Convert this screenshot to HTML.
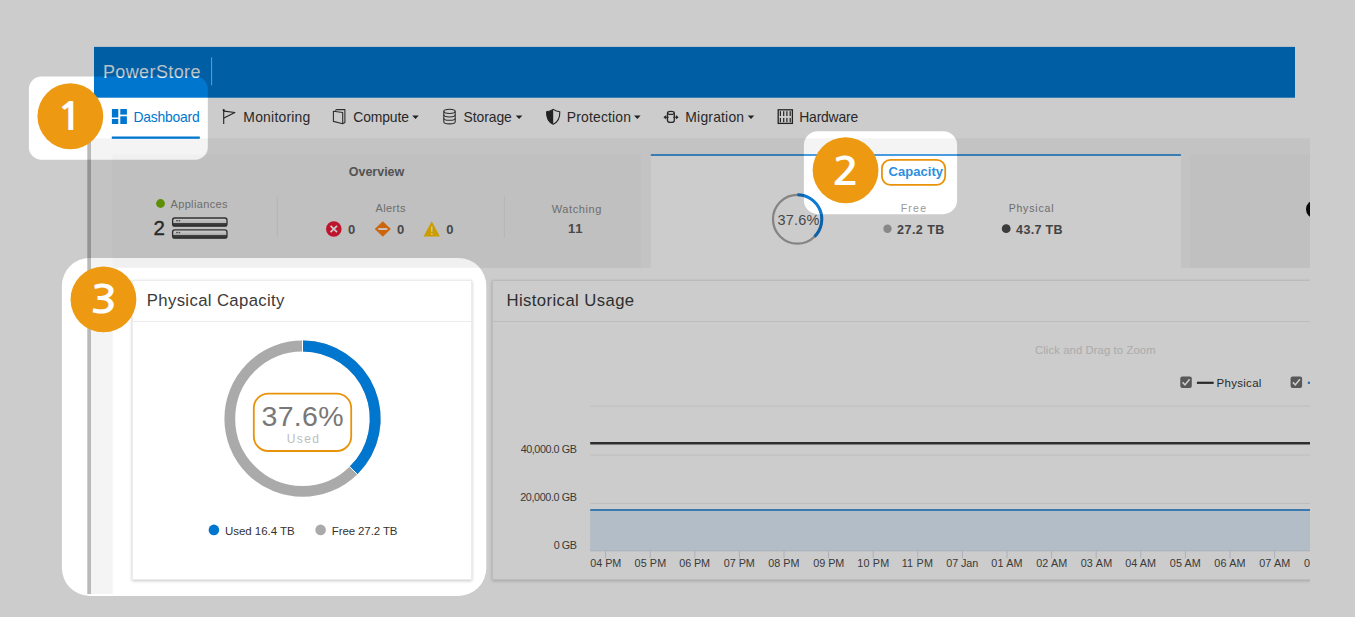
<!DOCTYPE html>
<html lang="en"><head><meta charset="utf-8"><title>PowerStore Dashboard</title>
<style>
html,body{margin:0;padding:0}
body{width:1355px;height:617px;overflow:hidden;background:#fff;position:relative;font-family:"Liberation Sans",Arial,sans-serif}
.t{position:absolute;line-height:1;white-space:nowrap;display:block}
.a{position:absolute;display:block}
#ui{position:absolute;left:0;top:0;width:1309.9px;height:593.8px;overflow:hidden}
.badge{position:absolute;width:66px;height:66px;color:#fff;font-family:"NanumGothic","Liberation Sans",sans-serif;font-weight:700;font-size:38.6px;line-height:66px;text-align:center}
.badge b{display:inline-block;font-weight:700;transform:scaleX(1.16);position:relative;top:0.8px;left:0.6px}
.ol{position:absolute;border:1.6px solid #e8930c;box-sizing:border-box}
</style></head><body>
<div id="ui">
<!-- header, page area, cards -->
<svg class="a" style="left:0;top:0" width="1310" height="594" viewBox="0 0 1310 594">
<rect x="94" y="46.9" width="1201" height="50.8" fill="#0076ce"/>
<rect x="211.1" y="57.3" width="1" height="28" fill="#fff" fill-opacity=".55"/>
<rect x="87.3" y="138.3" width="3.7" height="456" fill="#b9b9b9"/>
<rect x="91" y="138.3" width="1219" height="129.5" fill="#f4f4f4"/>
<rect x="91" y="267.8" width="21.7" height="327" fill="#f4f4f4"/>
<rect x="112.5" y="154.6" width="528.4" height="113.2" fill="#f0f0f0"/>
<rect x="650.8" y="154" width="530.1" height="113.8" fill="#fff"/>
<rect x="650.8" y="154" width="530.1" height="2" fill="#489cdf"/>
<rect x="1190.2" y="154.6" width="120" height="113.2" fill="#f0f0f0"/>
<circle cx="1315.1" cy="209.3" r="9.1" fill="#0d0d0d"/>
<rect x="111.8" y="136.5" width="88" height="2.3" fill="#0076ce"/>
<rect x="276.8" y="196.4" width="1" height="41" fill="#e3e3e3"/>
<rect x="503.9" y="196.4" width="1" height="41" fill="#e3e3e3"/>
</svg>
<div class="a" style="left:132.4px;top:279.5px;width:339.4px;height:300px;background:#fff;box-sizing:border-box;border:1px solid #ececec;box-shadow:0 1px 3px rgba(0,0,0,.22)"></div>
<div class="a" style="left:133.4px;top:320.6px;width:337.4px;height:1px;background:#ececec"></div>
<div class="a" style="left:492.4px;top:279.5px;width:900px;height:300.2px;background:#fff;box-sizing:border-box;border:1px solid #ececec;box-shadow:0 1px 3px rgba(0,0,0,.2)"></div>
<div class="a" style="left:493.4px;top:320.8px;width:900px;height:1px;background:#ededed"></div>
<svg class="a" style="left:0;top:0" width="1310" height="594" viewBox="0 0 1310 594">
<!-- dashboard icon -->
<g fill="#0076ce">
<rect x="111.9" y="109" width="6.4" height="8.5"/><rect x="111.9" y="119" width="6.4" height="5"/>
<rect x="120.3" y="109" width="6.6" height="5.6"/><rect x="120.3" y="116.3" width="6.6" height="7.7"/>
</g>
<!-- monitoring flag -->
<g fill="none" stroke="#2b2b2b" stroke-width="1.1" stroke-linejoin="round">
<path d="M223.7 110.2V124"/><path d="M223.9 111.1L234.9 112.5L223.9 117.9"/>
</g>
<circle cx="223.7" cy="110.2" r="1.1" fill="#2b2b2b"/>
<!-- compute -->
<g fill="none" stroke="#3a3a3a" stroke-width="1.1" stroke-linejoin="round">
<path d="M333.4 111.2L342.7 112.5V123.7L333.4 121.4Z"/>
<path d="M335.2 110.6L337 109.6H344.9V122.4L343 123.4"/>
</g>
<!-- storage cylinder -->
<g fill="none" stroke="#3a3a3a" stroke-width="1.05">
<ellipse cx="449.5" cy="111.3" rx="5.7" ry="2.1"/>
<path d="M443.8 111.3V121.7C443.8 124.6 455.2 124.6 455.2 121.7V111.3"/>
<path d="M443.8 114.8C443.8 117.6 455.2 117.6 455.2 114.8"/>
<path d="M443.8 118.2C443.8 121 455.2 121 455.2 118.2"/>
</g>
<!-- protection shield -->
<path d="M553.2 109.4C551 110.9 548.6 111.6 546.6 111.7C546.4 117.4 548.3 122 553.2 124.2C558.1 122 560 117.4 559.8 111.7C557.8 111.6 555.4 110.9 553.2 109.4Z" fill="#fff" stroke="#2b2b2b" stroke-width="1.1" stroke-linejoin="round"/>
<path d="M553.2 109.4C551 110.9 548.6 111.6 546.6 111.7C546.4 117.4 548.3 122 553.2 124.2Z" fill="#2b2b2b"/>
<!-- migration -->
<g fill="none" stroke="#333" stroke-width="1.3">
<ellipse cx="670.9" cy="112.9" rx="3.4" ry="1.5"/>
<path d="M667.5 112.9V120.4C667.5 123 674.3 123 674.3 120.4V112.9"/>
<path d="M665.6 117.3H668.6M673.2 117.3H676.4" stroke-width="1.1"/>
</g>
<path d="M663.4 117.3L666.2 115.1V119.5ZM678.7 117.3L675.9 115.1V119.5Z" fill="#333"/>
<!-- hardware -->
<rect x="778.2" y="109.8" width="14.2" height="13.6" fill="none" stroke="#2b2b2b" stroke-width="1.3"/>
<g fill="#2b2b2b">
<rect x="779.8" y="111.2" width="1.2" height="4.8"/><rect x="783.1" y="111.2" width="1.2" height="4.8"/><rect x="786.3" y="111.2" width="1.2" height="4.8"/><rect x="789.6" y="111.2" width="1.2" height="4.8"/>
<rect x="779.8" y="117.9" width="1.2" height="4.3"/><rect x="783.1" y="117.9" width="1.2" height="4.3"/><rect x="786.3" y="117.9" width="1.2" height="4.3"/><rect x="789.6" y="117.9" width="1.2" height="4.3"/>
</g>
<!-- carets -->
<g fill="#2b2b2b">
<path d="M412.2 115.6H418.8L415.5 119.1Z"/><path d="M515.8 115.6H522.4L519.1 119.1Z"/>
<path d="M634 115.6H640.6L637.3 119.1Z"/><path d="M747.7 115.6H754.3L751 119.1Z"/>
</g>
<!-- appliance status + icons -->
<circle cx="160.5" cy="203.5" r="4.4" fill="#76b30a"/>
<defs><linearGradient id="ag" x1="0" y1="0" x2="0" y2="1"><stop offset="0" stop-color="#ffffff"/><stop offset="0.55" stop-color="#e2e2e2"/><stop offset="0.62" stop-color="#555"/><stop offset="1" stop-color="#3a3a3a"/></linearGradient></defs>
<g stroke="#3c3c3c" stroke-width="1.3" fill="url(#ag)">
<rect x="172.6" y="218" width="54.4" height="8.2" rx="2.2"/>
<rect x="172.6" y="229.9" width="54.4" height="8.3" rx="2.2"/>
</g>
<g fill="#555"><rect x="176.2" y="220" width="1.5" height="1.3"/><rect x="178.6" y="220" width="1.5" height="1.3"/><rect x="176.2" y="231.9" width="1.5" height="1.3"/><rect x="178.6" y="231.9" width="1.5" height="1.3"/></g>
<!-- alert icons -->
<circle cx="333.8" cy="229" r="7.8" fill="#ee1a3a"/>
<path d="M330.6 225.8L337 232.2M337 225.8L330.6 232.2" stroke="#fff" stroke-width="1.7" fill="none"/>
<path d="M382.8 221.2L390.8 229L382.8 236.8L374.8 229Z" fill="#ff7f0e"/>
<rect x="378.3" y="228" width="9" height="2" fill="#fff" fill-opacity=".9"/>
<path d="M431.7 221.3L439.9 236.5H423.5Z" fill="#ffc400"/>
<rect x="431" y="226.3" width="1.5" height="5.6" fill="#fff" fill-opacity=".8"/><rect x="431" y="233" width="1.5" height="1.6" fill="#fff" fill-opacity=".8"/>
<!-- capacity mini donut -->
<circle cx="797.4" cy="219.2" r="24.4" fill="none" stroke="#a6a6a6" stroke-width="2.3"/>
<path d="M797.4 194.8A24.4 24.4 0 0 1 814.53 236.57" fill="none" stroke="#0f7bd2" stroke-width="3"/>
<circle cx="887.5" cy="228.7" r="4.2" fill="#aaa"/>
<circle cx="1006.2" cy="228.7" r="4.4" fill="#4a4a4a"/>
<!-- big donut -->
<circle cx="302.5" cy="418.7" r="72.7" fill="none" stroke="#aaaaaa" stroke-width="10.8"/>
<path d="M302.5 346A72.7 72.7 0 0 1 353.55 470.46" fill="none" stroke="#0076ce" stroke-width="10.8"/>
<path d="M302.5 340V352" stroke="#fff" stroke-width="1"/>
<path d="M349.4 466.3L357.8 474.8" stroke="#fff" stroke-width="1"/>
<circle cx="213.9" cy="529.9" r="5.3" fill="#0076ce"/>
<circle cx="320.6" cy="529.9" r="5.3" fill="#aaaaaa"/>
</svg>

<svg class="a" style="left:0;top:0" width="1310" height="594" viewBox="0 0 1310 594">
<g stroke="#eeeeee" stroke-width="1" fill="none">
<path d="M590.2 406.1H1310"/><path d="M590.2 455.1H1310"/><path d="M590.2 503.4H1310"/>
</g>
<rect x="590.2" y="510" width="720" height="40.6" fill="#dfedfa"/>
<path d="M590.2 550.8H1310" stroke="#d3dcea" stroke-width="1" fill="none"/>
<path d="M590.2 510.1H1310" stroke="#4b98dd" stroke-width="2" fill="none"/>
<path d="M590.2 443.3H1310" stroke="#3a3a3a" stroke-width="2.5" fill="none"/>
<g stroke="#d5dcec" stroke-width="1" fill="none"><path d="M605.6 550.5V558.3"/><path d="M650.2 550.5V558.3"/><path d="M694.8 550.5V558.3"/><path d="M739.4 550.5V558.3"/><path d="M784.0 550.5V558.3"/><path d="M828.6 550.5V558.3"/><path d="M873.2 550.5V558.3"/><path d="M917.8 550.5V558.3"/><path d="M962.4 550.5V558.3"/><path d="M1007.0 550.5V558.3"/><path d="M1051.6 550.5V558.3"/><path d="M1096.2 550.5V558.3"/><path d="M1140.8 550.5V558.3"/><path d="M1185.4 550.5V558.3"/><path d="M1230.0 550.5V558.3"/><path d="M1274.6 550.5V558.3"/><path d="M1319.2 550.5V558.3"/></g>
<!-- legend -->
<rect x="1180.3" y="376.4" width="11.5" height="11.5" rx="2" fill="#6e6e6e"/>
<path d="M1182.6 382.4L1185 384.9L1189.6 379.3" stroke="#fff" stroke-width="1.6" fill="none"/>
<path d="M1196.9 382.8H1213.7" stroke="#333" stroke-width="2.2"/>
<rect x="1290.6" y="376.4" width="11.5" height="11.5" rx="2" fill="#6e6e6e"/>
<path d="M1292.9 382.4L1295.3 384.9L1299.9 379.3" stroke="#fff" stroke-width="1.6" fill="none"/>
<path d="M1307.8 382.8H1325" stroke="#2f8bdc" stroke-width="2.2"/>
</svg>
<span class="t" id="t0" style="left:102.94px;top:63.00px;font-size:18px;font-weight:400;color:#e6f0f9;letter-spacing:0.386px;">PowerStore</span>
<span class="t" id="t1" style="left:133.49px;top:111.00px;font-size:13.9px;font-weight:400;color:#0076ce;letter-spacing:-0.210px;">Dashboard</span>
<span class="t" id="t2" style="left:243.36px;top:111.00px;font-size:13.9px;font-weight:400;color:#333;letter-spacing:0.228px;">Monitoring</span>
<span class="t" id="t3" style="left:353.28px;top:111.00px;font-size:13.9px;font-weight:400;color:#333;letter-spacing:-0.114px;">Compute</span>
<span class="t" id="t4" style="left:463.61px;top:111.00px;font-size:13.9px;font-weight:400;color:#333;letter-spacing:-0.082px;">Storage</span>
<span class="t" id="t5" style="left:566.80px;top:111.00px;font-size:13.9px;font-weight:400;color:#333;letter-spacing:0.181px;">Protection</span>
<span class="t" id="t6" style="left:685.34px;top:111.00px;font-size:13.9px;font-weight:400;color:#333;letter-spacing:0.199px;">Migration</span>
<span class="t" id="t7" style="left:799.26px;top:111.00px;font-size:13.9px;font-weight:400;color:#333;letter-spacing:-0.186px;">Hardware</span>
<span class="t" id="t8" style="left:348.74px;top:166.00px;font-size:12.5px;font-weight:700;color:#686868;letter-spacing:-0.009px;">Overview</span>
<span class="t" id="t9" style="left:170.51px;top:199.00px;font-size:11px;font-weight:400;color:#8a8a8a;letter-spacing:0.348px;">Appliances</span>
<span class="t" id="t10" style="left:153.60px;top:218.00px;font-size:20.5px;font-weight:400;color:#333;letter-spacing:0.000px;-webkit-text-stroke:0.35px #333;">2</span>
<span class="t" id="t11" style="left:375.50px;top:203.00px;font-size:11px;font-weight:400;color:#8a8a8a;letter-spacing:0.389px;">Alerts</span>
<span class="t" id="t12" style="left:347.89px;top:223.00px;font-size:13px;font-weight:700;color:#5a5a5a;letter-spacing:0.000px;">0</span>
<span class="t" id="t13" style="left:396.89px;top:223.00px;font-size:13px;font-weight:700;color:#5a5a5a;letter-spacing:0.000px;">0</span>
<span class="t" id="t14" style="left:446.19px;top:223.00px;font-size:13px;font-weight:700;color:#5a5a5a;letter-spacing:0.000px;">0</span>
<span class="t" id="t15" style="left:551.66px;top:204.00px;font-size:11px;font-weight:400;color:#8a8a8a;letter-spacing:0.608px;">Watching</span>
<span class="t" id="t16" style="left:567.90px;top:222.00px;font-size:13px;font-weight:700;color:#5a5a5a;letter-spacing:0.857px;">11</span>
<span class="t" id="t17" style="left:888.45px;top:165.00px;font-size:13px;font-weight:700;color:#2b8ee0;letter-spacing:0.065px;">Capacity</span>
<span class="t" id="t18" style="left:900.71px;top:203.00px;font-size:10.5px;font-weight:400;color:#999;letter-spacing:1.244px;">Free</span>
<span class="t" id="t19" style="left:897.09px;top:224.00px;font-size:12.5px;font-weight:700;color:#555;letter-spacing:0.453px;">27.2 TB</span>
<span class="t" id="t20" style="left:1008.63px;top:203.00px;font-size:10.5px;font-weight:400;color:#888;letter-spacing:0.828px;">Physical</span>
<span class="t" id="t21" style="left:1016.11px;top:224.00px;font-size:12.5px;font-weight:700;color:#555;letter-spacing:0.332px;">43.7 TB</span>
<span class="t" id="t22" style="left:777.59px;top:213.00px;font-size:14.5px;font-weight:400;color:#5a5a5a;letter-spacing:0.174px;">37.6%</span>
<span class="t" id="t23" style="left:146.78px;top:293.00px;font-size:16.7px;font-weight:400;color:#3a3a3a;letter-spacing:0.374px;">Physical Capacity</span>
<span class="t" id="t24" style="left:506.45px;top:293.00px;font-size:16.7px;font-weight:400;color:#3a3a3a;letter-spacing:0.414px;">Historical Usage</span>
<span class="t" id="t25" style="left:261.53px;top:402.00px;font-size:28.5px;font-weight:400;color:#787878;letter-spacing:0.289px;">37.6%</span>
<span class="t" id="t26" style="left:286.70px;top:433.00px;font-size:12px;font-weight:400;color:#bdbdbd;letter-spacing:1.407px;">Used</span>
<span class="t" id="t27" style="left:224.88px;top:526.00px;font-size:11.5px;font-weight:400;color:#333;letter-spacing:-0.017px;">Used 16.4 TB</span>
<span class="t" id="t28" style="left:331.81px;top:526.00px;font-size:11.5px;font-weight:400;color:#333;letter-spacing:-0.110px;">Free 27.2 TB</span>
<span class="t" id="t29" style="left:1034.94px;top:345.00px;font-size:11.2px;font-weight:400;color:#d6d6d6;letter-spacing:0.144px;">Click and Drag to Zoom</span>
<span class="t" id="t30" style="left:1216.56px;top:378.00px;font-size:11.5px;font-weight:400;color:#333;letter-spacing:0.288px;">Physical</span>
<span class="t" id="t31" style="left:520.64px;top:444.00px;font-size:10.8px;font-weight:400;color:#4a4a4a;letter-spacing:-0.433px;">40,000.0 GB</span>
<span class="t" id="t32" style="left:520.24px;top:492.00px;font-size:10.8px;font-weight:400;color:#4a4a4a;letter-spacing:-0.393px;">20,000.0 GB</span>
<span class="t" id="t33" style="left:553.77px;top:540.00px;font-size:10.8px;font-weight:400;color:#4a4a4a;letter-spacing:-0.473px;">0 GB</span>
<span class="t" id="t34" style="left:590.22px;top:558.00px;font-size:10.8px;font-weight:400;color:#4a4a4a;letter-spacing:-0.020px;">04 PM</span>
<span class="t" id="t35" style="left:634.56px;top:558.00px;font-size:10.8px;font-weight:400;color:#4a4a4a;letter-spacing:0.095px;">05 PM</span>
<span class="t" id="t36" style="left:679.34px;top:558.00px;font-size:10.8px;font-weight:400;color:#4a4a4a;letter-spacing:-0.152px;">06 PM</span>
<span class="t" id="t37" style="left:723.86px;top:558.00px;font-size:10.8px;font-weight:400;color:#4a4a4a;letter-spacing:-0.081px;">07 PM</span>
<span class="t" id="t38" style="left:768.26px;top:558.00px;font-size:10.8px;font-weight:400;color:#4a4a4a;letter-spacing:0.020px;">08 PM</span>
<span class="t" id="t39" style="left:813.19px;top:558.00px;font-size:10.8px;font-weight:400;color:#4a4a4a;letter-spacing:-0.014px;">09 PM</span>
<span class="t" id="t40" style="left:857.20px;top:558.00px;font-size:10.8px;font-weight:400;color:#4a4a4a;letter-spacing:0.185px;">10 PM</span>
<span class="t" id="t41" style="left:901.66px;top:558.00px;font-size:10.8px;font-weight:400;color:#4a4a4a;letter-spacing:0.223px;">11 PM</span>
<span class="t" id="t42" style="left:946.26px;top:558.00px;font-size:10.8px;font-weight:400;color:#4a4a4a;letter-spacing:-0.075px;">07 Jan</span>
<span class="t" id="t43" style="left:991.28px;top:558.00px;font-size:10.8px;font-weight:400;color:#4a4a4a;letter-spacing:0.166px;">01 AM</span>
<span class="t" id="t44" style="left:1036.20px;top:558.00px;font-size:10.8px;font-weight:400;color:#4a4a4a;letter-spacing:0.136px;">02 AM</span>
<span class="t" id="t45" style="left:1080.64px;top:558.00px;font-size:10.8px;font-weight:400;color:#4a4a4a;letter-spacing:0.228px;">03 AM</span>
<span class="t" id="t46" style="left:1125.36px;top:558.00px;font-size:10.8px;font-weight:400;color:#4a4a4a;letter-spacing:-0.003px;">04 AM</span>
<span class="t" id="t47" style="left:1169.83px;top:558.00px;font-size:10.8px;font-weight:400;color:#4a4a4a;letter-spacing:0.080px;">05 AM</span>
<span class="t" id="t48" style="left:1214.24px;top:558.00px;font-size:10.8px;font-weight:400;color:#4a4a4a;letter-spacing:0.177px;">06 AM</span>
<span class="t" id="t49" style="left:1259.22px;top:558.00px;font-size:10.8px;font-weight:400;color:#4a4a4a;letter-spacing:0.131px;">07 AM</span>
<span class="t" id="t50" style="left:1303.88px;top:558.00px;font-size:10.8px;font-weight:400;color:#4a4a4a;letter-spacing:-0.163px;">08 AM</span>
</div>
<!-- dim overlay with highlight holes -->
<svg class="a" style="left:0;top:0" width="1355" height="617" viewBox="0 0 1355 617">
<path fill="#000" fill-opacity="0.2" fill-rule="evenodd" d="M0 0H1355V617H0Z
M41.4 76.6H195.3A12.5 12.5 0 0 1 207.8 89.1V147.2A12.5 12.5 0 0 1 195.3 159.7H41.4A12.5 12.5 0 0 1 28.9 147.2V89.1A12.5 12.5 0 0 1 41.4 76.6Z
M817.9 131.2H943.1A14 14 0 0 1 957.1 145.2V200.2A14 14 0 0 1 943.1 214.2H817.9A14 14 0 0 1 803.9 200.2V145.2A14 14 0 0 1 817.9 131.2Z
M89.9 257.9H458.3A28 28 0 0 1 486.3 285.9V568A28 28 0 0 1 458.3 596H89.9A28 28 0 0 1 61.9 568V285.9A28 28 0 0 1 89.9 257.9Z"/>
</svg>
<!-- callouts -->
<svg class="a" style="left:0;top:0" width="1355" height="617" viewBox="0 0 1355 617">
<circle cx="70.35" cy="116.25" r="32.9" fill="#ed9a12"/><circle cx="845.55" cy="170.25" r="32.9" fill="#ed9a12"/><circle cx="103.45" cy="299.45" r="32.9" fill="#ed9a12"/>
<rect x="881.9" y="159.8" width="63.3" height="25" rx="8.5" fill="none" stroke="#e9930b" stroke-width="1.8"/>
<rect x="253.8" y="393.6" width="97.4" height="57.4" rx="14.5" fill="none" stroke="#e9930b" stroke-width="1.8"/>
</svg>
<div class="badge" style="left:37px;top:83px"><b style="left:-0.6px">1</b></div>
<div class="badge" style="left:812px;top:137px"><b style="top:1.6px;left:0.9px">2</b></div>
<div class="badge" style="left:70px;top:266px"><b>3</b></div>
</body></html>
